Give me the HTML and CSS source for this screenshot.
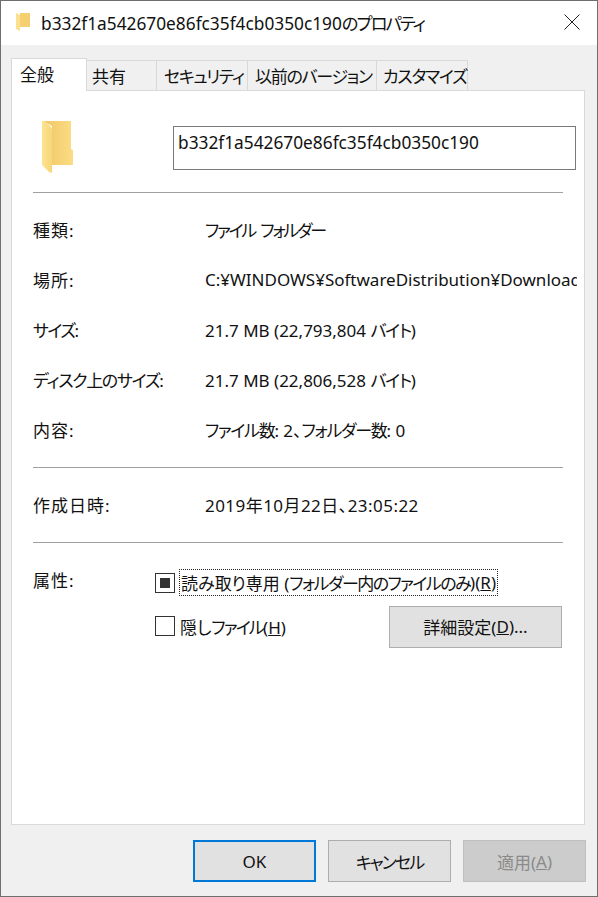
FILE: index.html
```html
<!DOCTYPE html>
<html lang="ja">
<head>
<meta charset="utf-8">
<title>プロパティ</title>
<link rel="stylesheet" href="styles.css">
</head>
<body>
<div class="window">
  <header class="titlebar">
    <svg class="title-icon" viewBox="0 0 16 20" width="16" height="20">
      <path d="M5 1H15V15H5Z" fill="#f5cf70"/>
      <path d="M1 1L5 3V19L1 17Z" fill="#fbe08f"/>
    </svg>
    <span class="title-text">b332f1a542670e86fc35f4cb0350c190<span class="kt">のプロパティ</span></span>
    <svg class="close" viewBox="0 0 16 16" width="16" height="16">
      <path d="M.5.5L15.5 15.5M15.5.5L.5 15.5" stroke="#222" stroke-width="1" fill="none"/>
    </svg>
  </header>
  <div class="client">
    <nav class="tabs">
      <div class="tab active">全般</div>
      <div class="tab t2">共有</div>
      <div class="tab t3">セキュリティ</div>
      <div class="tab t4">以前のバージョン</div>
      <div class="tab t5">カスタマイズ</div>
    </nav>
    <main class="panel">
      <div class="head">
        <svg class="folder" viewBox="0 0 32 53" width="32" height="53">
          <defs>
            <linearGradient id="back" x1="0" x2="1" y1="0" y2="0">
              <stop offset="0" stop-color="#efc765"/>
              <stop offset="1" stop-color="#fcdc84"/>
            </linearGradient>
            <linearGradient id="front" x1="0" x2="1" y1="0" y2="0">
              <stop offset="0" stop-color="#fde28f"/>
              <stop offset="1" stop-color="#f8d67a"/>
            </linearGradient>
          </defs>
          <path d="M1 0H29V28L31 29V44H10V5Z" fill="url(#back)"/>
          <path d="M0 0H3L9 6L10 8V52L7 51L0 44Z" fill="url(#front)"/>
        </svg>
        <div class="name">b332f1a542670e86fc35f4cb0350c190</div>
      </div>
      <hr class="sep">
      <dl class="props">
        <div class="row"><dt class="kj">種類:</dt><dd><span class="kv">ファイル フォルダー</span></dd></div>
        <div class="row"><dt class="kj">場所:</dt><dd class="clip">C:¥WINDOWS¥SoftwareDistribution¥Download</dd></div>
        <div class="row"><dt><span class="kn">サイズ</span>:</dt><dd>21.7 MB (22,793,804 <span class="k">バイト</span>)</dd></div>
        <div class="row"><dt><span class="k">ディスク上のサイズ</span>:</dt><dd>21.7 MB (22,806,528 <span class="k">バイト</span>)</dd></div>
        <div class="row"><dt class="kj">内容:</dt><dd><span class="k">ファイル数</span>: 2、<span class="k">フォルダー数</span>: 0</dd></div>
      </dl>
      <hr class="sep sep2">
      <div class="row date"><span class="dt kj">作成日時:</span><span class="dd wide">2019年10月22日、23:05:22</span></div>
      <hr class="sep sep3">
      <section class="attrs">
        <div class="attr-label kj">属性:</div>
        <div class="attr-body">
          <div class="check first">
            <span class="box"><span class="mark"></span></span>
            <span class="focus">読み取り専用 (<span class="kf">フォルダー内のファイルのみ</span>)(<u>R</u>)</span>
          </div>
          <div class="second">
            <div class="check low">
              <span class="box"></span>
              <span class="plain">隠し<span class="kh">ファイル</span>(<u>H</u>)</span>
            </div>
            <div class="btn adv">詳細設定(<u>D</u>)...</div>
          </div>
        </div>
      </section>
    </main>
    <footer class="actions">
      <div class="btn ok">OK</div>
      <div class="btn"><span class="kc">キャンセル</span></div>
      <div class="btn off">適用(<u>A</u>)</div>
    </footer>
  </div>
</div>
</body>
</html>
```
FILE: styles.css
```css
* { box-sizing: border-box; }
html, body { margin: 0; height: 100%; }
body {
  font-family: "Noto Sans", "Noto Sans CJK JP", sans-serif;
  font-size: 17px;
  font-feature-settings: "palt";
  color: #111;
  background: #fff;
}
.k { letter-spacing: -1.3px; }
.kv { letter-spacing: -2.2px; word-spacing: 3px; }
.kn { letter-spacing: -1.6px; }
.kf { letter-spacing: -1.55px; }
.kh { letter-spacing: -1.8px; }
.kc { letter-spacing: -1.9px; }
.kt { letter-spacing: -1.9px; }
.kj { letter-spacing: 1px; }
.window {
  width: 598px;
  height: 897px;
  border: 1px solid #6f6f6f;
  display: flex;
  flex-direction: column;
}
.titlebar {
  height: 44px;
  background: #fff;
  display: flex;
  align-items: center;
  padding-left: 14px;
  flex: none;
}
.title-icon { flex: none; margin-right: 10px; margin-top: -2px; }
.title-text { flex: 1; font-size: 17.3px; white-space: nowrap; margin-top: -2px; }
.close { flex: none; margin-right: 17px; margin-top: -2px; }
.client {
  flex: 1;
  background: #f0f0f0;
  padding: 13px 12px 0 10px;
  display: flex;
  flex-direction: column;
}
.tabs { display: flex; height: 33px; align-items: flex-end; position: relative; z-index: 1; }
.tab {
  height: 31px;
  border: 1px solid #d9d9d9;
  border-left: 0;
  display: flex;
  align-items: center;
  white-space: nowrap;
  padding: 0 0 1px 5px;
}
.tab.active {
  width: 76px;
  height: 33px;
  background: #fff;
  border-left: 1px solid #d9d9d9;
  border-bottom: 0;
  padding: 0 0 3px 8px;
}
.t2 { width: 70px; }
.t3 { width: 91px; padding-left: 7px; letter-spacing: -1.4px; }
.t4 { width: 129px; padding-left: 7px; letter-spacing: -1.3px; }
.t5 { width: 91px; padding-left: 6px; letter-spacing: -1.3px; }
.panel {
  height: 735px;
  margin-top: -1px;
  background: #fff;
  border: 1px solid #d9d9d9;
  padding: 0 21px;
  flex: none;
}
.head { height: 101px; display: flex; position: relative; }
.folder { flex: none; margin: 30px 0 0 9px; }
.name {
  width: 403px;
  height: 44px;
  margin: 35px 0 0 99px;
  border: 1px solid #7a7a7a;
  padding: 3px 4px;
  font-size: 17.3px;
  line-height: 26px;
  flex: none;
  margin-right: -20px;
  white-space: nowrap;
}
.sep { margin: 0; border: 0; height: 1px; background: #a0a0a0; width: 530px; }
.props { margin: 12px 0 0; }
.row { display: flex; height: 50px; align-items: center; margin: 0; padding-bottom: 2px; }
.row dt, .dt { width: 172px; flex: none; }
.row dd, .dd {
  margin: 0;
  width: 372px;
  margin-right: -20px;
  white-space: nowrap;
  flex: none;
}
.clip { overflow: hidden; }
.wide { letter-spacing: .45px; }
.sep2 { margin-top: 12px; }
.date { margin-top: 12px; }
.sep3 { margin-top: 12px; }
.attrs { display: flex; padding-top: 26px; }
.attr-label { width: 122px; flex: none; line-height: 24px; }
.attr-body { width: 408px; }
.check { display: flex; align-items: center; }
.low { margin-top: -2px; }
.box {
  width: 20px;
  height: 20px;
  border: 1px solid #333;
  background: #fff;
  display: flex;
  align-items: center;
  justify-content: center;
  flex: none;
}
.mark { width: 10px; height: 10px; background: #333; }
.focus {
  margin-left: 4px;
  height: 27px;
  border: 1px dotted #222;
  display: flex;
  align-items: center;
  padding: 0 1px;
  white-space: pre;
}
.plain { margin-left: 5px; margin-right: auto; white-space: pre; }
.second { display: flex; justify-content: space-between; align-items: center; margin-top: 10px; }
.btn {
  width: 123px;
  height: 42px;
  background: #e1e1e1;
  border: 1px solid #adadad;
  display: flex;
  align-items: center;
  justify-content: center;
  white-space: pre;
}
.adv { width: 173px; margin-right: 1px; padding-bottom: 2px; }
.actions {
  display: flex;
  justify-content: flex-end;
  gap: 12px;
  margin-top: 15px;
  margin-right: -1px;
}
.ok { border: 2px solid #0078d7; }
.off { background: #cccccc; border-color: #bfbfbf; color: #8a8a8a; }
```
